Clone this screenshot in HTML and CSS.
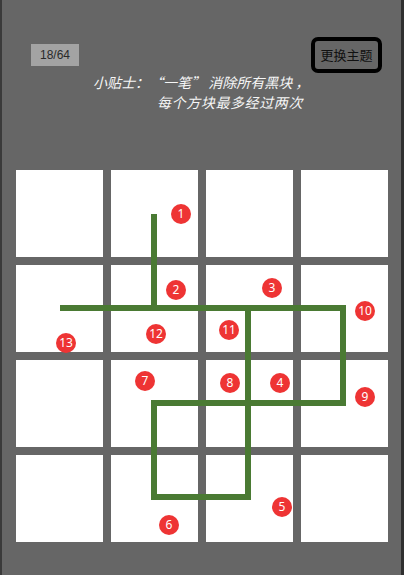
FILE: index.html
```html
<!DOCTYPE html>
<html lang="zh">
<head>
<meta charset="utf-8">
<title>一笔消除</title>
<link rel="stylesheet" href="styles.css">
</head>
<body>
<div class="page">
  <header class="header">
    <div class="counter">18/64</div>
    <button class="theme-btn">更换主题</button>
  </header>
  <div class="tip">
    <div class="tip-line first">小贴士：“一笔” 消除所有黑块 ，</div>
    <div class="tip-line second">每个方块最多经过两次</div>
  </div>
  <div class="board">
    <div class="cell"></div><div class="cell"></div><div class="cell"></div><div class="cell"></div>
    <div class="cell"></div><div class="cell"></div><div class="cell"></div><div class="cell"></div>
    <div class="cell"></div><div class="cell"></div><div class="cell"></div><div class="cell"></div>
    <div class="cell"></div><div class="cell"></div><div class="cell"></div><div class="cell"></div>
    <svg class="path" width="372" height="372" viewBox="0 0 372 372">
      <g fill="none" stroke="#4a7a33" stroke-width="6" stroke-linecap="square">
        <line x1="138" y1="47" x2="138" y2="138"/>
        <line x1="47" y1="138" x2="327" y2="138"/>
        <line x1="232" y1="138" x2="232" y2="327"/>
        <line x1="327" y1="138" x2="327" y2="233"/>
        <line x1="138" y1="233" x2="327" y2="233"/>
        <line x1="138" y1="233" x2="138" y2="327"/>
        <line x1="138" y1="327" x2="232" y2="327"/>
      </g>
    </svg>
    <span class="mark" style="left:165px;top:44px">1</span>
    <span class="mark" style="left:160px;top:120px">2</span>
    <span class="mark" style="left:256px;top:118px">3</span>
    <span class="mark" style="left:264px;top:213px">4</span>
    <span class="mark" style="left:266px;top:337px">5</span>
    <span class="mark" style="left:153px;top:355px">6</span>
    <span class="mark" style="left:129px;top:211px">7</span>
    <span class="mark" style="left:214px;top:213px">8</span>
    <span class="mark" style="left:349px;top:227px">9</span>
    <span class="mark" style="left:349px;top:141px">10</span>
    <span class="mark" style="left:213px;top:160px">11</span>
    <span class="mark" style="left:140px;top:164px">12</span>
    <span class="mark" style="left:50px;top:173px">13</span>
  </div>
</div>
</body>
</html>
```

FILE: styles.css
```css
html, body {
  margin: 0;
  padding: 0;
  background: #666666;
}

.page {
  box-sizing: border-box;
  width: 404px;
  height: 575px;
  background: #666666;
  border-left: 2px solid #3a3a3a;
  border-right: 3px solid #2f2f2f;
  overflow: hidden;
  font-family: "Noto Sans CJK SC", "Noto Sans", sans-serif;
}

.header {
  display: flex;
  justify-content: space-between;
  align-items: flex-start;
  padding: 37px 19px 0 29px;
}

.counter {
  margin-top: 7px;
  width: 48px;
  height: 22px;
  background: #a3a3a3;
  color: #2a2a2a;
  font-family: "Liberation Sans", "Noto Sans", sans-serif;
  font-size: 12px;
  line-height: 22px;
  text-align: center;
}

.theme-btn {
  box-sizing: border-box;
  width: 71px;
  height: 36px;
  padding: 0;
  border: 4px solid #000000;
  border-radius: 7px;
  background: #666666;
  color: #111111;
  font-family: "Noto Sans CJK SC", sans-serif;
  font-size: 13px;
  line-height: 28px;
}

.tip {
  margin: -1px 0 0 0;
  color: #f6f6f6;
  font-style: italic;
  font-size: 14px;
  line-height: 20px;
  word-spacing: 0;
}

.tip-line {
  white-space: nowrap;
}

.tip-line.first {
  padding-left: 91px;
}

.tip-line.second {
  padding-left: 155px;
  letter-spacing: 0.6px;
}

.board {
  position: relative;
  margin: 58px 0 0 14px;
  width: 372px;
  display: grid;
  grid-template-columns: repeat(4, 87px);
  grid-auto-rows: 87px;
  gap: 8px;
}

.cell {
  background: #ffffff;
}

.path {
  position: absolute;
  left: 0;
  top: 0;
  pointer-events: none;
}

.mark {
  position: absolute;
  width: 20px;
  height: 20px;
  margin: -10px 0 0 -10px;
  border-radius: 50%;
  background: #ee3434;
  color: #ffffff;
  font-family: "Noto Sans", "Liberation Sans", sans-serif;
  font-size: 12px;
  line-height: 20px;
  text-align: center;
}
```
